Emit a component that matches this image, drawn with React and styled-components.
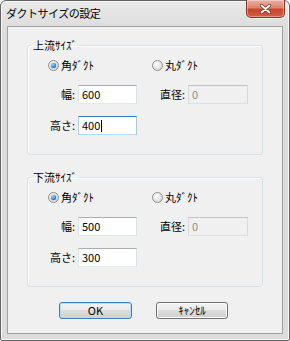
import React from 'react'
import styled, { createGlobalStyle } from 'styled-components'

const GlobalStyle = createGlobalStyle`
  html, body {
    margin: 0;
    padding: 0;
    background: #ffffff;
  }

  body {
    font-family: "Noto Sans CJK JP", "Noto Sans", sans-serif;
    font-size: 11px;
    color: #000000;
  }
`

const Window = styled.div`
  box-sizing: border-box;
  width: 290px;
  height: 341px;
  display: flex;
  flex-direction: column;
  border: 1px solid #646464;
  border-radius: 6px 6px 2px 2px;
  background: linear-gradient(#e9e9e9, #dcdcdc 30px, #dcdcdc);
  box-shadow: inset 0 0 0 1px #f6f6f6;
`

const TitleBar = styled.div`
  height: 25px;
  display: flex;
  justify-content: space-between;
  align-items: flex-start;
  padding-left: 5px;
`

const Title = styled.div`
  font-size: 11px;
  letter-spacing: -0.5px;
  line-height: 25px;
  color: #000000;
`

const CloseButton = styled.div`
  box-sizing: border-box;
  width: 39px;
  height: 18px;
  margin: -1px 4px 0 0;
  display: flex;
  align-items: center;
  justify-content: center;
  border: 1px solid #86352a;
  border-top: none;
  border-radius: 0 0 5px 5px;
  background: linear-gradient(#eab0a4 0%, #de8470 45%, #c9452c 55%, #d35f44 100%);
  box-shadow: inset 0 0 0 1px rgba(255, 255, 255, .35), 0 1px 0 #f2f2f2;
`

const Client = styled.div`
  flex: 1;
  box-sizing: border-box;
  margin: 0 6px 6px 6px;
  padding: 11px 19px 0 19px;
  border: 1px solid #a0a0a0;
  background: #f0f0f0;
`

const Group = styled.fieldset`
  box-sizing: border-box;
  width: 236px;
  margin: ${props => props.$first ? '0' : '15px 0 0 0'};
  padding: 5px 0 19px 0;
  border: 1px solid #d5dfe5;
  border-radius: 3px;
  box-shadow: inset 1px 1px 0 #ffffff;
  min-inline-size: 0;
`

const Legend = styled.legend`
  margin-left: 3px;
  padding: 0 2px;
  line-height: 14px;
  font-size: 11px;
`

const Grid = styled.div`
  display: grid;
  grid-template-columns: 47px 59px 45px 60px;
  column-gap: 3px;
  row-gap: 12px;
`

const RadioLabel = styled.div`
  grid-column: span 2;
  display: flex;
  align-items: center;
  gap: 2px;
  height: 16px;
  padding-left: ${props => props.$indent}px;
  line-height: 16px;
`

const RadioCircle = styled.span`
  box-sizing: border-box;
  width: 11px;
  height: 11px;
  border-radius: 50%;
  border: 1px solid #8f8f8f;
  background: radial-gradient(circle at 40% 35%, #ffffff, #dcdcdc 70%, #cfcfcf);
  display: flex;
  align-items: center;
  justify-content: center;

  &::after {
    content: '';
    display: ${props => props.$checked ? 'block' : 'none'};
    width: 5px;
    height: 5px;
    border-radius: 50%;
    background: radial-gradient(circle at 35% 30%, #9fd6ff, #2a83d6 60%, #1a4f9a);
    box-shadow: 0 0 1px #1a4f9a;
  }
`

const FieldLabel = styled.div`
  text-align: right;
  line-height: 19px;
  white-space: nowrap;
`

const TextBox = styled.div`
  box-sizing: border-box;
  height: 19px;
  padding-left: 3px;
  line-height: 17px;
  font-size: 11px;
  border: 1px solid;
  border-color: ${props => props.$focused
    ? '#3d7bad #a4c9e3 #b7d9ed #b5cfe7'
    : props.$disabled
      ? '#c2c2c2 #d9d9d9 #e0e0e0 #d9d9d9'
      : '#abadb3 #dbdfe6 #e3e9ef #e2e3ea'};
  background: ${props => props.$disabled ? '#f0f0f0' : '#ffffff'};
  color: ${props => props.$disabled ? '#8d8d8d' : '#000000'};
  white-space: nowrap;
`

const Caret = styled.span`
  display: inline-block;
  width: 1px;
  height: 12px;
  margin-left: 1px;
  vertical-align: -2px;
  background: #000000;
`

const ButtonRow = styled.div`
  display: flex;
  gap: 24px;
  margin-top: 15px;
  padding-left: 32px;
`

const Button = styled.button`
  box-sizing: border-box;
  width: ${props => props.$width}px;
  height: 17px;
  padding: 0;
  font-family: "Noto Sans CJK JP", "Noto Sans", sans-serif;
  font-size: 11px;
  line-height: 15px;
  color: #000000;
  border: 1px solid ${props => props.$default ? '#3c7fb1' : '#707070'};
  border-radius: 3px;
  background: linear-gradient(#f2f2f2 0%, #ebebeb 50%, #dddddd 50%, #cfcfcf 100%);
  box-shadow: inset 0 0 0 1px ${props => props.$default ? '#aee0f8' : '#fbfbfb'};
`

function DuctGroup({ title, first, width, height, focused }) {
  return (
    <Group $first={first}>
      <Legend>{title}</Legend>
      <Grid>
        <RadioLabel $indent={20}>
          <RadioCircle $checked />
          角ﾀﾞｸﾄ
        </RadioLabel>
        <RadioLabel $indent={12}>
          <RadioCircle />
          丸ﾀﾞｸﾄ
        </RadioLabel>

        <FieldLabel>幅:</FieldLabel>
        <TextBox>{width}</TextBox>
        <FieldLabel>直径:</FieldLabel>
        <TextBox $disabled>0</TextBox>

        <FieldLabel>高さ:</FieldLabel>
        <TextBox $focused={focused}>
          {height}
          {focused && <Caret />}
        </TextBox>
      </Grid>
    </Group>
  )
}

export default function App() {
  return (
    <>
      <GlobalStyle />
      <Window>
        <TitleBar>
          <Title>ダクトサイズの設定</Title>
          <CloseButton>
            <svg width="11" height="10" viewBox="0 0 11 10">
              <path d="M1.5 1.5 L9.5 8.5 M9.5 1.5 L1.5 8.5" stroke="#5a2a22" strokeWidth="3.2" strokeLinecap="round" />
              <path d="M1.5 1.5 L9.5 8.5 M9.5 1.5 L1.5 8.5" stroke="#ffffff" strokeWidth="1.8" strokeLinecap="round" />
            </svg>
          </CloseButton>
        </TitleBar>
        <Client>
          <DuctGroup title="上流ｻｲｽﾞ" first width="600" height="400" focused />
          <DuctGroup title="下流ｻｲｽﾞ" width="500" height="300" />
          <ButtonRow>
            <Button $width={73} $default>OK</Button>
            <Button $width={72}>ｷｬﾝｾﾙ</Button>
          </ButtonRow>
        </Client>
      </Window>
    </>
  )
}
